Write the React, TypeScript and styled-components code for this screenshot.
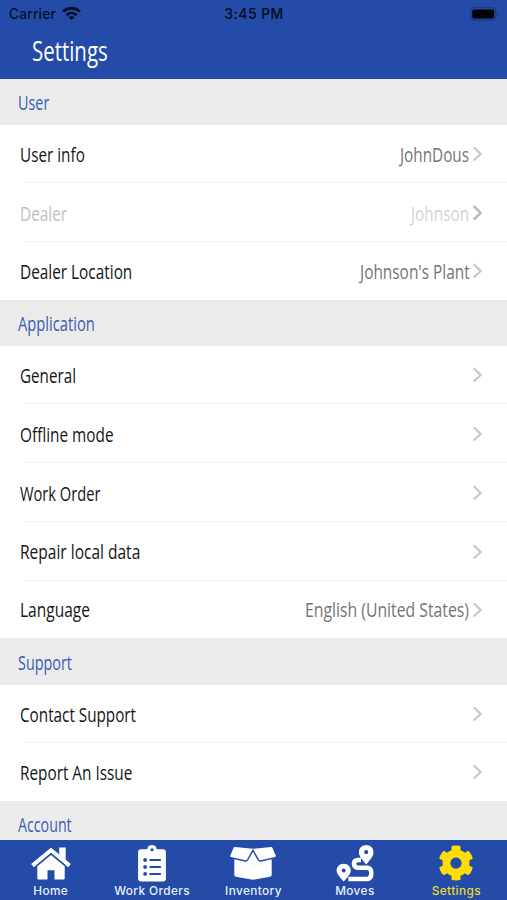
import React, { useLayoutEffect, useRef } from "react";
import styled, { createGlobalStyle } from "styled-components";
import { FaCog } from "react-icons/fa";

const BLUE = "#254ba8";

const GlobalStyle = createGlobalStyle`
  *, *::before, *::after { box-sizing: border-box; }
  body { margin: 0; background: #fff; }
`;

const Screen = styled.main`
  display: flex;
  flex-direction: column;
  width: 507px;
  height: 900px;
  overflow: hidden;
  background: #fff;
  font-family: "Open Sans", "Noto Sans", sans-serif;
`;

const TopBar = styled.header`
  flex: none;
  height: 78.8px;
  background: ${BLUE};
`;

const StatusBar = styled.div`
  display: grid;
  grid-template-columns: 1fr auto 1fr;
  align-items: center;
  height: 28px;
  padding: 0 8px 0 9px;
  color: #071128;
  font: 500 13.8px/28px Inter, sans-serif;
`;

const Carrier = styled.div`
  display: flex;
  align-items: center;
  gap: 6px;
  letter-spacing: 0.15px;

  svg {
    margin-top: -2px;
  }
`;

const Clock = styled.div`
  font-weight: 600;
  font-size: 13.8px;
  letter-spacing: 0.5px;
`;

const BatterySlot = styled.div`
  display: flex;
  justify-content: flex-end;
`;

const TitleRow = styled.div`
  display: flex;
  align-items: center;
  height: 48px;
  padding-left: 32.3px;
  color: #fff;
`;

const List = styled.div`
  flex: 1;
  min-height: 0;
  overflow: hidden;
`;

const SectionHeader = styled.h2`
  display: flex;
  align-items: center;
  height: 46.2px;
  margin: 0;
  padding: 0.6px 0 0 17.5px;
  background: #ebebeb;
  color: #3b5cb4;
`;

const Row = styled.div<{ $disabled?: boolean }>`
  display: flex;
  align-items: center;
  justify-content: space-between;
  height: 58.7px;
  padding: 0 24.5px 0 20px;
  color: ${(p) => (p.$disabled ? "#c0c0c0" : "#151515")};
  background: linear-gradient(#f1f1f1, #f1f1f1) 25px 100% / 100% 1.4px no-repeat;

  &:last-child {
    height: 57.6px;
    background: none;
  }
`;

const Trailing = styled.div<{ $disabled?: boolean }>`
  display: flex;
  align-items: center;
  gap: 2.5px;
  color: ${(p) => (p.$disabled ? "#d3d3d3" : "#747474")};
`;

const FitBox = styled.span<{ $width: number; $size: number; $weight: number }>`
  display: block;
  width: ${(p) => p.$width}px;
  font-size: ${(p) => p.$size}px;
  font-weight: ${(p) => p.$weight};
  line-height: 1.4;
  white-space: nowrap;
`;

const FitText = styled.span`
  display: inline-block;
  transform-origin: 0 50%;
`;

const TabBar = styled.nav`
  flex: none;
  display: grid;
  grid-template-columns: repeat(5, 1fr);
  height: 60.4px;
  padding-top: 4px;
  background: ${BLUE};
`;

const Tab = styled.div<{ $active?: boolean }>`
  display: flex;
  flex-direction: column;
  align-items: center;
  color: ${(p) => (p.$active ? "#fddf06" : "#fff")};
`;

const IconSlot = styled.div`
  display: flex;
  align-items: center;
  height: 39px;

  svg {
    display: block;
  }
`;

const TabLabel = styled.span<{ $active?: boolean }>`
  font: 500 11.8px/16px Inter, sans-serif;
  letter-spacing: 0.4px;
  white-space: nowrap;
  color: ${(p) => (p.$active ? "#e8d92f" : "#e9effc")};
`;

/* Condenses a run of text horizontally to the given width. */
function Narrow({ text, width, size = 20.4, weight = 500 }: {
  text: string; width: number; size?: number; weight?: number;
}) {
  const ref = useRef<HTMLSpanElement>(null);
  useLayoutEffect(() => {
    const fit = () => {
      const el = ref.current;
      if (el) el.style.transform = `scaleX(${width / el.offsetWidth})`;
    };
    fit();
    document.fonts.ready.then(fit);
  }, [text, width]);
  return (
    <FitBox $width={width} $size={size} $weight={weight}>
      <FitText ref={ref}>{text}</FitText>
    </FitBox>
  );
}

const Chevron = ({ strong }: { strong?: boolean }) => (
  <svg width="11" height="16" viewBox="0 0 11 16" fill="none"
    stroke={strong ? "#b9b9b9" : "#c6c6c6"} strokeWidth={strong ? 2.4 : 2.1}>
    <path d="M1.7 1.2 8.7 7.9 1.7 14.6" />
  </svg>
);

const Wifi = () => (
  <svg width="19" height="15" viewBox="0 0 19 15" fill="none" stroke="#071128" strokeWidth="3">
    <path d="M1.1 5.5C5.8 1 13.2 1 17.9 5.5" />
    <path d="M4.4 9.2c3-2.7 7.2-2.7 10.2 0" strokeWidth="2.7" />
    <path d="m6.6 11.2 2.9 3.1 2.9-3.1q-2.9-2.2-5.8 0Z" fill="#071128" stroke="none" />
  </svg>
);

const Battery = () => (
  <svg width="29" height="14" viewBox="0 0 29 14">
    <rect x=".7" y=".7" width="25" height="12.4" rx="3.7" fill="none" stroke="#1d3a83" strokeWidth="1.3" />
    <rect x="2.2" y="2.4" width="22" height="9" rx="1.8" fill="#000208" />
    <path d="M27 4.6q2.2 2.3 0 4.6Z" fill="#1d3a83" />
  </svg>
);

const HomeIcon = () => (
  <svg width="42" height="38" viewBox="0 0 42 38" fill="currentColor">
    <path d="M29.2 3.4h6.5v13l-6.5-5.7Z" />
    <path d="M2.5 21.7 21 6.3l18.5 15.4" fill="none" stroke="currentColor" strokeWidth="4.3" strokeLinejoin="round" />
    <path d="M7.3 22.2 21 10.9l13.7 11.3v12.2q0 1.1-1.1 1.1h-9.1v-9.3h-7v9.3H8.4q-1.1 0-1.1-1.1Z" />
    <path d="m6.6 21.3 14.4-12 14.4 12" fill="none" stroke={BLUE} strokeWidth="1" />
  </svg>
);

const ClipboardIcon = () => (
  <svg width="30" height="38" viewBox="0 0 30 38" fill="currentColor">
    <path d="M4 5.2h6.2Q11 1.1 15 1.1t4.8 4.1H26q2.9 0 2.9 2.9v26.4q0 2.9-2.9 2.9H4q-2.9 0-2.9-2.9V8.1q0-2.9 2.9-2.9Z" />
    <g fill={BLUE}>
      <circle cx="15" cy="5.8" r="1.6" />
      <circle cx="8.1" cy="16" r="1.9" /><circle cx="8.1" cy="23" r="1.9" /><circle cx="8.1" cy="29.9" r="1.9" />
      <path d="M12.5 15.1h11.4V17H12.5Zm0 7h11.4V24H12.5Zm0 6.9h11.4v1.9H12.5Z" />
    </g>
  </svg>
);

const BoxIcon = () => (
  <svg width="48" height="38" viewBox="0 0 48 38" fill="currentColor">
    <path d="M5.9 2.9q-.9-.1-1.3.8L1.3 11.5q-.5 1.1.7 1.5l14.5 3.2q1 .2 1.5-.6L24 4.8Z" />
    <path d="M42.1 2.9q.9-.1 1.3.8l3.3 7.8q.5 1.1-.7 1.5l-14.5 3.2q-1 .2-1.5-.6L24 4.8Z" />
    <path d="m24 7.7-4.8 8.6q-1 1.8-3 1.4L5.3 15.2v15.6q0 1.6 1.6 2l15.6 2.7q1.5.3 3 0l15.6-2.7q1.6-.4 1.6-2V15.2l-10.9 2.5q-2 .4-3-1.4Z" />
  </svg>
);

const RouteIcon = () => (
  <svg width="38" height="38" viewBox="0 0 38 38" fill="currentColor">
    <path fillRule="evenodd" d="M30.2 1.1c4.1 0 7.3 3.1 7.3 7.1 0 4.4-4.6 8.7-7.3 12.4-2.7-3.7-7.3-8-7.3-12.4 0-4 3.2-7.1 7.3-7.1Zm0 4.9a2.1 2.1 0 1 0 0 4.2 2.1 2.1 0 0 0 0-4.2Z" />
    <path fillRule="evenodd" d="M7.7 19.7c4.1 0 7.1 2.9 7.1 6.8 0 3.8-4.1 7.5-7.1 11.1-3-3.6-7.1-7.3-7.1-11.1 0-3.9 3-6.8 7.1-6.8Zm0 4.8a2 2 0 1 0 0 4 2 2 0 0 0 0-4Z" />
    <path d="M25 15.9h-2.6q-4.5 0-4.5 3.9t4.5 3.9H31q4.3 0 4.3 5.6t-4.3 5.8H12.3" fill="none" stroke="currentColor" strokeWidth="4.5" />
  </svg>
);

type Item = { label: string; width: number; value?: string; valueWidth?: number; disabled?: boolean };
type SectionData = { title: string; width: number; items: Item[] };

const sections: SectionData[] = [
  {
    title: "User", width: 31, items: [
      { label: "User info", width: 64.5, value: "JohnDous", valueWidth: 69 },
      { label: "Dealer", width: 47.5, value: "Johnson", valueWidth: 58, disabled: true },
      { label: "Dealer Location", width: 112.3, value: "Johnson's Plant", valueWidth: 109.5 },
    ],
  },
  {
    title: "Application", width: 76.5, items: [
      { label: "General", width: 56 },
      { label: "Offline mode", width: 93.5 },
      { label: "Work Order", width: 80.5 },
      { label: "Repair local data", width: 120.3 },
      { label: "Language", width: 70, value: "English (United States)", valueWidth: 164 },
    ],
  },
  {
    title: "Support", width: 54.3, items: [
      { label: "Contact Support", width: 116 },
      { label: "Report An Issue", width: 112 },
    ],
  },
  { title: "Account", width: 53.7, items: [] },
];

const tabs = [
  { label: "Home", icon: <HomeIcon /> },
  { label: "Work Orders", icon: <ClipboardIcon /> },
  { label: "Inventory", icon: <BoxIcon /> },
  { label: "Moves", icon: <RouteIcon /> },
  { label: "Settings", icon: <FaCog size={36} />, active: true },
];

export default function App() {
  return (
    <>
      <GlobalStyle />
      <Screen>
        <TopBar>
          <StatusBar>
            <Carrier>Carrier <Wifi /></Carrier>
            <Clock>3:45 PM</Clock>
            <BatterySlot><Battery /></BatterySlot>
          </StatusBar>
          <TitleRow><Narrow text="Settings" width={75.5} size={26.5} /></TitleRow>
        </TopBar>
        <List>
          {sections.map((s) => (
            <section key={s.title}>
              <SectionHeader><Narrow text={s.title} width={s.width} /></SectionHeader>
              {s.items.map((it) => (
                <Row key={it.label} $disabled={it.disabled}>
                  <Narrow text={it.label} width={it.width} />
                  <Trailing $disabled={it.disabled}>
                    {it.value && <Narrow text={it.value} width={it.valueWidth ?? 0} />}
                    <Chevron strong={it.disabled} />
                  </Trailing>
                </Row>
              ))}
            </section>
          ))}
        </List>
        <TabBar>
          {tabs.map((t) => (
            <Tab key={t.label} $active={t.active}>
              <IconSlot>{t.icon}</IconSlot>
              <TabLabel $active={t.active}>{t.label}</TabLabel>
            </Tab>
          ))}
        </TabBar>
      </Screen>
    </>
  );
}
